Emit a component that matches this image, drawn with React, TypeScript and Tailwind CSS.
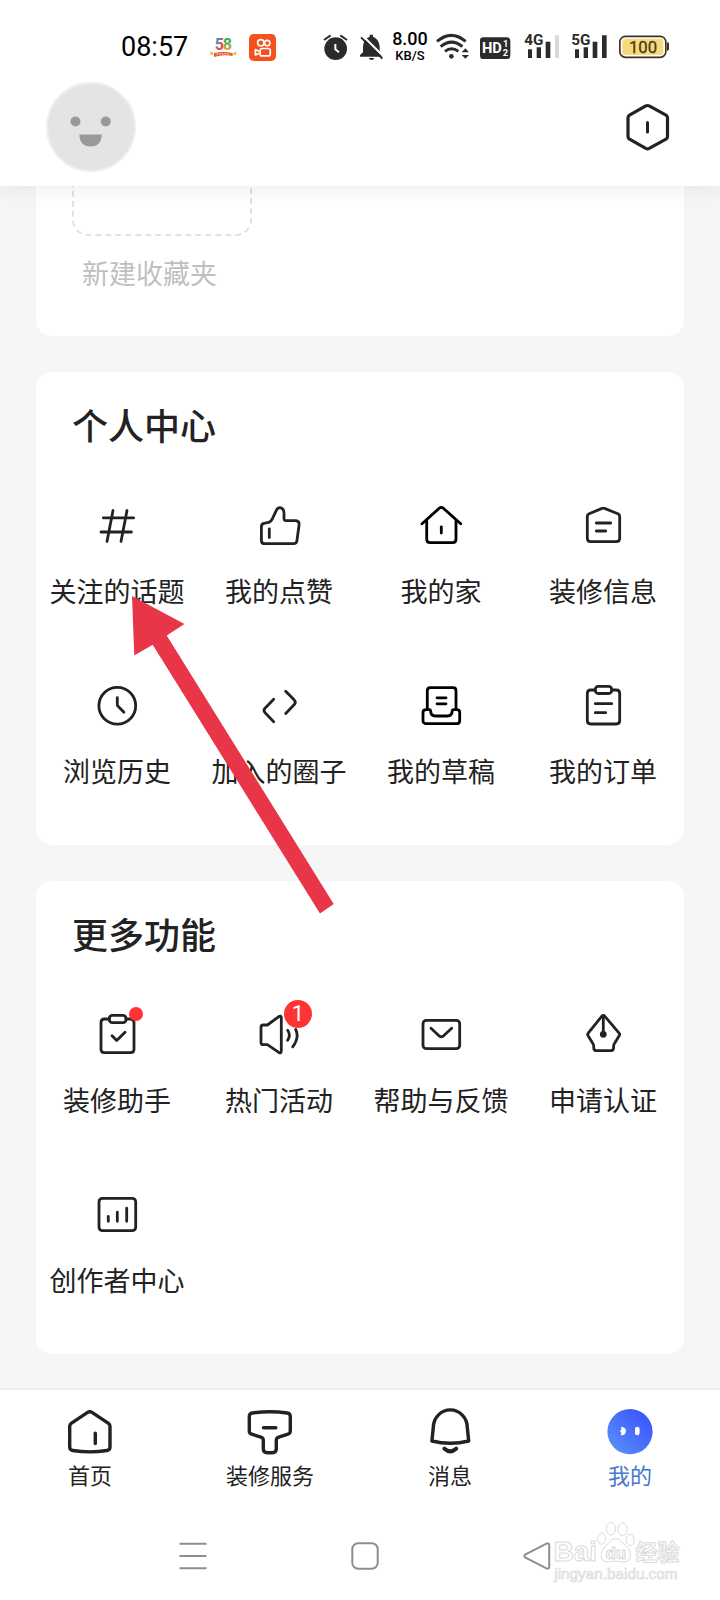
import type { ReactNode } from "react"

type Entry = {
  label: string
  icon: ReactNode
  dot?: boolean
  count?: number
}

function Icon({ children, black }: { children: ReactNode; black?: boolean }) {
  return (
    <svg
      viewBox="0 0 44 44"
      className={black ? "size-11 text-black" : "size-11 text-[#222222]"}
      fill="none"
      stroke="currentColor"
      strokeWidth="2.8"
      strokeLinecap="round"
      strokeLinejoin="round"
      aria-hidden="true"
    >
      {children}
    </svg>
  )
}

const personal: Entry[] = [
  {
    label: "关注的话题",
    icon: (
      <Icon>
        <path d="M18 7.5l-6 31M32 7.5l-6 31M8.3 14.8h30.4M6 29h30.4" />
      </Icon>
    ),
  },
  {
    label: "我的点赞",
    icon: (
      <Icon>
        <path d="M8 40.7h28.5q3 0 3.4-2.8l2.2-16.2q.3-3.6-3.2-4H28.6q-1.6-.4-1.6-2v-6q-.2-4.4-4-5-2.6 0-3.8 3l-4 8.5q-1 2.2-3.4 3.2l-4 .8q-3.4.4-3.4 3.4v13.8q0 3.3 3.6 3.3z" />
        <path d="M12.3 25.8v8.8" />
      </Icon>
    ),
  },
  {
    label: "我的家",
    icon: (
      <Icon black>
        <path d="M3 20.7L20.3 5.2q2-1.6 4 0L41.7 20.7" />
        <path d="M7.7 17.5v18.7q0 3.5 3.5 3.5h22.3q3.5 0 3.5-3.5V17.5" />
        <path d="M22.3 23.8v6.2" />
      </Icon>
    ),
  },
  {
    label: "装修信息",
    icon: (
      <Icon>
        <path d="M6.3 35.2V13.6q0-2 1.8-2.8L21 5.4q1.3-.6 2.6 0l13.3 5.4q1.8.8 1.8 2.8v21.6q0 3.5-3.5 3.5H9.8q-3.5 0-3.5-3.5z" />
        <path d="M15.3 20h14.4M15.3 28h9.4" />
      </Icon>
    ),
  },
  {
    label: "浏览历史",
    icon: (
      <Icon>
        <circle cx="22.3" cy="22.8" r="18.4" />
        <path d="M22.3 14.7v7q0 .8.6 1.4l6 6.2" />
      </Icon>
    ),
  },
  {
    label: "加入的圈子",
    icon: (
      <Icon>
        <path d="M16.7 16.3L8 25.2q-2 2.2 0 4.4l8.7 9.2" />
        <path d="M28.7 8.3l8.6 8.8q2 2.2 0 4.4l-8.6 9" />
      </Icon>
    ),
  },
  {
    label: "我的草稿",
    icon: (
      <Icon black>
        <path d="M8.3 26.5V7.7q0-3 3-3H34q3 0 3 3v18.8" />
        <path d="M7 26.7h3.2q1.3 0 1.4 1.2.2 5.1 4.8 5.1h12q4.6 0 4.8-5.1.1-1.2 1.4-1.2h3.2q2.9 0 2.9 2.9v7.8q0 3.3-3.3 3.3H7.3Q4 40.7 4 37.4v-7.8q0-2.9 3-2.9z" />
        <path d="M18 14.8h9M18 20.8h9" />
      </Icon>
    ),
  },
  {
    label: "我的订单",
    icon: (
      <Icon>
        <path d="M14.3 7H9.8q-3.5 0-3.5 3.5v27q0 3.5 3.5 3.5h25.4q3.5 0 3.5-3.5v-27q0-3.5-3.5-3.5h-4.5" />
        <rect x="14.3" y="3.3" width="16.4" height="7.2" rx="3" />
        <path d="M14.3 20.7h16.4M14.3 29.7h10.4" />
      </Icon>
    ),
  },
]

const more: Entry[] = [
  {
    label: "装修助手",
    dot: true,
    icon: (
      <Icon>
        <path d="M14.3 7H9.5Q6 7 6 10.5v26.7q0 3.5 3.5 3.5h26q3.5 0 3.5-3.5V10.5Q39 7 35.5 7H31" />
        <rect x="14.3" y="3.3" width="16.7" height="7.4" rx="3" />
        <path d="M17 23.8l4.7 4.7 8.3-8.3" />
      </Icon>
    ),
  },
  {
    label: "热门活动",
    count: 1,
    icon: (
      <Icon>
        <path d="M6.2 13h4.2L21.8 4.6q2.5-1.3 2.5 1.4v33q0 2.7-2.5 1.4L10.4 32.7H6.2Q4 32.7 4 30.5V15.2Q4 13 6.2 13z" />
        <path d="M30.7 18.3q3.4 5 0 10M38.7 17.5q4 8-3 17.3" />
      </Icon>
    ),
  },
  {
    label: "帮助与反馈",
    icon: (
      <Icon>
        <rect x="4" y="8.3" width="36.7" height="28.4" rx="3.5" />
        <path d="M12 16.3l8.5 7.9q1.8 1.4 3.6 0l8.6-7.9" />
      </Icon>
    ),
  },
  {
    label: "申请认证",
    icon: (
      <Icon>
        <path d="M20.7 4.4q1.6-1.8 3.2 0l14 16.4q1.3 1.5.3 3l-4.9 8q-.7 1-.7 2.4v1.2q0 3.3-3.3 3.3H16q-3.3 0-3.3-3.3v-1.2q0-1.4-.7-2.4l-4.9-8q-1-1.5.3-3z" />
        <path d="M22.3 4v18" />
        <circle cx="22.3" cy="22.3" r="2" fill="currentColor" />
      </Icon>
    ),
  },
  {
    label: "创作者中心",
    icon: (
      <Icon>
        <rect x="4" y="6.3" width="36.7" height="32.4" rx="3.5" />
        <path d="M13.3 24.5v4.8M22.3 20.2v9.1M31.7 16.2v13.1" />
      </Icon>
    ),
  },
]

function StatusBar() {
  return (
    <div className="flex h-10 items-center justify-between pr-[50px] pl-[121px]">
      <div className="flex items-center">
        <span className="text-[27px] leading-10 text-black">08:57</span>
        <svg viewBox="318 48 108 90" className="ml-[18px] h-[30px] w-9" aria-hidden="true">
          <defs>
            <linearGradient id="five" x1="0" y1="0" x2="1" y2="1">
              <stop offset="0.3" stopColor="#3b8fd0" />
              <stop offset="0.6" stopColor="#e5484d" />
            </linearGradient>
            <linearGradient id="eight" x1="0" y1="0" x2="0" y2="1">
              <stop offset="0.4" stopColor="#3fb24f" />
              <stop offset="0.8" stopColor="#f2a01d" />
            </linearGradient>
          </defs>
          <text x="344" y="101" fontSize="48" fontWeight="700" fill="url(#five)">5</text>
          <text x="368" y="101" fontSize="48" fontWeight="700" fill="url(#eight)">8</text>
          <path d="M342 111q28-6 56 0v9q-28-5-56 3z" fill="#e8603c" />
          <path d="M330 107l10 2-1 8-7-2zM400 110l10-3-2 9-7 2z" fill="#f3b63d" />
          <path d="M350 114h40" stroke="#fff" strokeWidth="3" strokeDasharray="4 4" />
        </svg>
        <svg viewBox="445 52 80 80" className="ml-[7px] size-[27px]" fill="none" stroke="#fff" strokeWidth="5" aria-hidden="true">
          <rect x="445" y="52" width="80" height="80" rx="14" fill="#f4511e" stroke="none" />
          <circle cx="480" cy="78" r="9.5" />
          <circle cx="499" cy="79" r="8" />
          <rect x="478" y="95" width="30" height="22" rx="6" />
          <path d="M476 104l-12-6v16l12-5" strokeLinejoin="round" />
        </svg>
      </div>

      <div className="flex items-center gap-1.5">
        <svg viewBox="669 48 87 90" className="h-[30px] w-[29px]" fill="none" stroke="#2b2b2b" aria-hidden="true">
          <circle cx="707" cy="98" r="34" fill="#2b2b2b" stroke="none" />
          <path d="M672 72l20-14M721 58l20 14" strokeWidth="6" />
          <path d="M706 84v16l11 9" stroke="#fff" strokeWidth="6" />
        </svg>
        <svg viewBox="774 48 78 90" className="h-[30px] w-[26px]" aria-hidden="true">
          <path d="M780 122v-5l9-8V92q1-24 20-30v-6h10v6q18 6 20 30v17l9 8v5zM806 126h17q-2 6-8 6t-9-6z" fill="#2b2b2b" />
          <path d="M789 60l64 64" stroke="#fff" strokeWidth="6" />
          <path d="M783 64l64 64" stroke="#2b2b2b" strokeWidth="6" />
        </svg>
        <div className="flex w-10 flex-col items-center font-medium text-black">
          <span className="text-[18px] leading-[18px]">8.00</span>
          <span className="text-[13px] leading-4">KB/S</span>
        </div>
        <svg viewBox="108 48 114 90" className="h-[30px] w-[38px]" fill="none" stroke="#2b2b2b" strokeWidth="9" aria-hidden="true">
          <path d="M111 76q43-36 86 0M122 92q33-27 65 0M135 106q20-15 40 0" />
          <circle cx="154" cy="121" r="7" fill="#2b2b2b" stroke="none" />
          <path d="M185 109l11-12 11 12zM185 117l11 11 11-11z" fill="#2b2b2b" stroke="none" />
        </svg>
        <svg viewBox="240 48 111 90" className="h-[30px] w-[37px]" fill="#fff" aria-hidden="true">
          <rect x="240" y="64" width="91" height="65" rx="10" fill="#2b2b2b" />
          <text x="246" y="112" fontSize="44" fontWeight="700">HD</text>
          <text x="309" y="93" fontSize="28" fontWeight="700">1</text>
          <text x="308" y="120" fontSize="28" fontWeight="700">2</text>
        </svg>
        <svg viewBox="369 48 126 90" className="h-[30px] w-[42px]" fill="#2b2b2b" aria-hidden="true">
          <text x="373" y="88" fontSize="46" fontWeight="700">4G</text>
          <path d="M384 100h12v26h-12zM410 94h13v32h-13zM437 77h14v49h-14z" />
          <path d="M465 58h12v68h-12z" fill="#d9d9d9" />
        </svg>
        <svg viewBox="513 48 126 90" className="h-[30px] w-[42px]" fill="#2b2b2b" aria-hidden="true">
          <text x="514" y="88" fontSize="46" fontWeight="700">5G</text>
          <path d="M525 100h12v26h-12zM551 94h13v32h-13zM578 77h14v49h-14zM606 58h14v68h-14z" />
        </svg>
        <svg viewBox="657 48 153 90" className="h-[30px] w-[51px]" aria-hidden="true">
          <rect x="659.5" y="61" width="138" height="63" rx="17" fill="#fff" stroke="#3a3426" strokeWidth="5" />
          <rect x="667" y="68" width="123" height="49" rx="10" fill="#f9d97c" />
          <path d="M801 78q6 2 6 6v15q0 4-6 6z" fill="#3a3426" />
          <text x="729" y="111" fontSize="50" textAnchor="middle" fill="#4a3a12" stroke="#4a3a12">100</text>
        </svg>
      </div>
    </div>
  )
}

function Header() {
  return (
    <header className="relative z-10 bg-white pt-[27px] shadow-[0_6px_20px_rgba(0,0,0,0.06)]">
      <StatusBar />
      <div className="flex h-[119px] items-center justify-between pr-[50px] pl-[46px]">
        <button type="button" aria-label="头像">
          <svg viewBox="0 0 90 90" className="size-[90px]">
            <circle cx="45" cy="45" r="44" fill="#e4e4e4" stroke="#eeeeee" strokeWidth="2" />
            <circle cx="29.5" cy="39.5" r="5" fill="#999999" />
            <circle cx="59.8" cy="39.5" r="5" fill="#999999" />
            <path d="M33.3 52.5h22.5q-.5 12-11.2 12t-11.3-12z" fill="#999999" />
          </svg>
        </button>
        <button type="button" aria-label="设置">
          <svg viewBox="0 0 46 50" className="h-[50px] w-[46px]" fill="none" stroke="#222222" strokeWidth="3.2" strokeLinejoin="round" strokeLinecap="round">
            <path d="M21.8 3.9q1.7-.8 3.4 0L42 13.2q1.5.9 1.5 2.6v18.800q0 1.700-1.500 2.600l-16.800 9.200q-1.700.8-3.400 0L5.500 37.200Q4 36.300 4 34.600V15.800q0-1.700 1.500-2.600z" />
            <path d="M23.5 20.5v9.6" strokeWidth="3" />
          </svg>
        </button>
      </div>
    </header>
  )
}

function Section({ title, items }: { title: string; items: Entry[] }) {
  return (
    <section className="rounded-2xl bg-white pt-[30px] pb-[52px]">
      <h2 className="pl-9 text-[36px] leading-[52px] font-medium text-[#222222]">{title}</h2>
      <div className="mt-[49px] grid grid-cols-4 gap-y-[70px]">
        {items.map((item) => (
          <button key={item.label} type="button" className="flex flex-col items-center gap-[26px]">
            <span className="relative">
              {item.icon}
              {item.dot && <i className="absolute -top-[5px] -right-1 size-3.5 rounded-full bg-[#ff3333]" />}
              {item.count && (
                <b className="absolute -top-3 -right-[11px] size-7 rounded-full bg-[#ff3333] text-center text-[22px] leading-7 font-normal text-white">
                  {item.count}
                </b>
              )}
            </span>
            <span className="text-[27px] leading-10 whitespace-nowrap text-[#222222]">{item.label}</span>
          </button>
        ))}
      </div>
    </section>
  )
}

const tabs = [
  {
    label: "首页",
    icon: (
      <>
        <path d="M3.7 40V19.5q0-2 1.5-3.2L21.6 5.4q2.2-1.5 4.4 0l16.5 10.9q1.5 1.2 1.5 3.2V40q0 3-3 3.5-17 2.8-34.3 0-3-.5-3-3.5z" />
        <path d="M29.3 26.2v10.3" />
      </>
    ),
  },
  {
    label: "装修服务",
    icon: (
      <>
        <path d="M6.3 6q17.500-2.600 35 0 3 .5 3 3.500V24q0 2.500-2.300 3.200l-9.300 2.900q-2.400.8-2.400 3.200v8.400q0 4-4 4h-5q-4 0-4-4v-8.400q0-2.400-2.400-3.200L5.600 27.200Q3.300 26.500 3.300 24V9.500q0-3 3-3.500z" />
        <path d="M17.5 20.7h12.3" />
      </>
    ),
  },
  {
    label: "消息",
    icon: (
      <>
        <path d="M7.3 20.5a17 17.6 0 0 1 34 0l1.4 13.5q-18.4 4.6-36.8 0z" />
        <path d="M18.5 41.7q5.8 5.2 11.6 0" strokeWidth="4" />
      </>
    ),
  },
]

function TabBar() {
  return (
    <nav className="grid grid-cols-4 border-t-2 border-[#f0f0f0] bg-white pt-[17px]">
      {tabs.map((tab) => (
        <a key={tab.label} href="#" className="flex flex-col items-center gap-2 text-[#222222]">
          <svg viewBox="0 0 48 48" className="size-12" fill="none" stroke="currentColor" strokeWidth="3.4" strokeLinecap="round" strokeLinejoin="round" aria-hidden="true">
            {tab.icon}
          </svg>
          <span className="text-[22px] leading-7">{tab.label}</span>
        </a>
      ))}
      <a href="#" aria-current="page" className="flex flex-col items-center gap-2 text-[#4677d0]">
        <svg viewBox="0 0 48 48" className="size-12" aria-hidden="true">
          <defs>
            <linearGradient id="face" x1="0" y1="0.9" x2="0.8" y2="0.1">
              <stop offset="0" stopColor="#5b90fb" />
              <stop offset="1" stopColor="#3c58fa" />
            </linearGradient>
          </defs>
          <circle cx="24" cy="24.7" r="22.6" fill="url(#face)" />
          <path d="M15 19.7q4.8.4 5 4.2-.2 4-5 4.6-.6-1.6.8-2.5-1.6-.6-1.5-2.1 0-1.4 1.5-2-1.2-.8-.8-2.200z" fill="#fff" />
          <rect x="29" y="19.7" width="4.6" height="8.6" rx="2.3" fill="#fff" />
        </svg>
        <span className="text-[22px] leading-7">我的</span>
      </a>
    </nav>
  )
}

function SystemNav() {
  return (
    <div className="relative bg-white pt-[50px] pb-[27px]">
      <div className="grid grid-cols-3 justify-items-center pr-[97px] pl-[107px]">
        <button type="button" aria-label="最近任务">
          <svg viewBox="0 0 30 30" className="size-[30px]" stroke="#8e8e8e" strokeWidth="2">
            <path d="M1.5 2.7h27M1.5 15h27M1.5 27.3h27" />
          </svg>
        </button>
        <button type="button" aria-label="主屏幕">
          <svg viewBox="0 0 30 30" className="size-[30px]" fill="none" stroke="#8e8e8e" strokeWidth="2">
            <rect x="2.3" y="2.3" width="25.4" height="25.4" rx="6" />
          </svg>
        </button>
        <button type="button" aria-label="返回">
          <svg viewBox="0 0 30 30" className="size-[30px]" fill="none" stroke="#8e8e8e" strokeWidth="2">
            <path d="M3.5 13.4L24.5 2.6q2.7-1 2.7 1.8v21.2q0 2.8-2.7 1.8L3.5 16.6q-2.4-1.6 0-3.2z" />
          </svg>
        </button>
      </div>

      {/* 水印 */}
      <svg
        viewBox="570 455 400 190"
        className="absolute right-9 bottom-3.5 w-[133px]"
        fill="#fff"
        stroke="#dadada"
        strokeWidth="3"
        fontFamily='"Liberation Sans","Noto Sans CJK SC",sans-serif'
      >
        <text x="578" y="575" fontSize="84" fontWeight="700">Bai</text>
        <ellipse cx="722" cy="508" rx="12" ry="17" />
        <ellipse cx="750" cy="478" rx="14" ry="19" />
        <ellipse cx="785" cy="480" rx="14" ry="19" />
        <ellipse cx="808" cy="512" rx="12" ry="17" />
        <path d="M765 508q14 0 22 14 22 16 22 36 0 20-20 20-12 0-24-3-12 3-24 3-20 0-20-20t22-36q8-14 22-14z" />
        <text x="735" y="568" fontSize="50" fontWeight="700">du</text>
        <text x="824" y="572" fontSize="66" fontWeight="700">经验</text>
        <text x="580" y="628" fontSize="46" strokeWidth="2" fill="#f4f4f4">jingyan.baidu.com</text>
      </svg>
    </div>
  )
}

export default function App() {
  return (
    <div className='relative bg-[#f6f6f6] font-["Roboto","Noto_Sans_CJK_SC",sans-serif]'>
      <Header />

      <main className="flex flex-col gap-9 px-9 pb-[34px]">
        {/* 收藏夹 */}
        <section className="rounded-b-2xl bg-white pb-[41px] pl-9">
          <div className="h-[50px] w-[180px] rounded-b-2xl border-2 border-t-0 border-dashed border-[#e2e2e2]" />
          <p className="mt-[19px] pl-2.5 text-[27px] leading-10 text-[#bfbfbf]">新建收藏夹</p>
        </section>

        <Section title="个人中心" items={personal} />
        <Section title="更多功能" items={more} />
      </main>

      <TabBar />
      <SystemNav />

      {/* 指向“关注的话题”的箭头 */}
      <svg
        viewBox="0 0 202 318"
        className="pointer-events-none absolute top-[596px] left-[132px] z-20 w-[202px]"
        fill="#e83548"
        aria-hidden="true"
      >
        <path d="M0 0L52.5 28 34.7 39.5 201.7 308 188 317.5 20.7 48.7 2.3 59.5z" />
      </svg>
    </div>
  )
}
